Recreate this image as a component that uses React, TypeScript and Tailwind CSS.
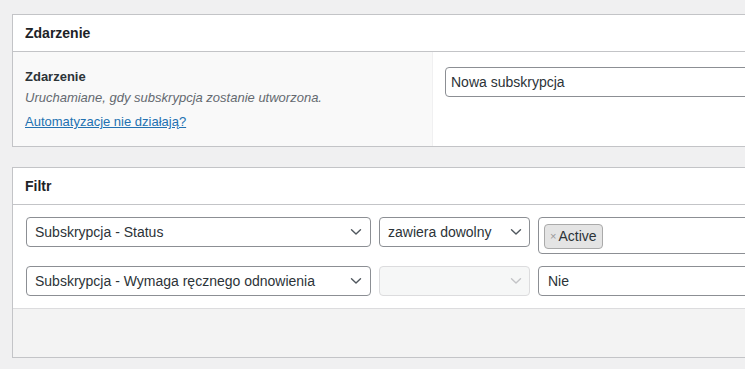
import React from "react";

const Chevron = ({ light = false }: { light?: boolean }) => (
  <svg width="12" height="8" viewBox="0 0 12 8" className="shrink-0">
    <path
      d="M1.5 1.8 L6 6 L10.5 1.8"
      fill="none"
      stroke={light ? "#c3c4c7" : "#50575e"}
      strokeWidth="1.4"
      strokeLinecap="round"
      strokeLinejoin="round"
    />
  </svg>
);

export default function App() {
  return (
    <div
      className="w-[745px] h-[369px] overflow-hidden bg-[#f0f0f1] pl-[12px] pt-[14px] text-[#1d2327]"
      style={{ fontFamily: '"Liberation Sans", Arial, sans-serif' }}
    >
      {/* Card 1 */}
      <div className="w-[900px] bg-white border border-[#c3c4c7]">
        <div className="h-[37px] border-b border-[#c3c4c7] flex items-center pl-[12px]">
          <h2 className="text-[14px] font-bold leading-none">Zdarzenie</h2>
        </div>
        <div className="flex h-[94px]">
          <div className="w-[420px] shrink-0 bg-[#f9f9f9] border-r border-[#f0f0f1] pl-[12px] pt-[17px]">
            <div className="text-[13px] font-bold leading-[16px] text-[#2c3338]">Zdarzenie</div>
            <div className="text-[13px] italic leading-[16px] mt-[5px] text-[#646970]">
              Uruchamiane, gdy subskrypcja zostanie utworzona.
            </div>
            <a className="block text-[13px] leading-[16px] mt-[8px] text-[#2271b1] underline">
              Automatyzacje nie działają?
            </a>
          </div>
          <div className="flex-1 pl-[12px] pt-[15px]">
            <div className="h-[30px] w-[400px] shrink-0 border border-[#8c8f94] rounded-[4px] flex items-center pl-[5px] text-[14px] text-[#2c3338]">
              Nowa subskrypcja
            </div>
          </div>
        </div>
      </div>

      {/* Card 2 */}
      <div className="w-[900px] mt-[20px] bg-white border border-[#c3c4c7]">
        <div className="h-[37px] border-b border-[#c3c4c7] flex items-center pl-[12px]">
          <h2 className="text-[14px] font-bold leading-none">Filtr</h2>
        </div>
        <div className="pl-[13px] pt-[12px] pb-[12px] flex flex-col gap-[12px]">
          <div className="flex items-start gap-[8px]">
            <div className="w-[345px] shrink-0 h-[30px] border border-[#8c8f94] rounded-[4px] flex items-center justify-between pl-[8px] pr-[8px] text-[14px] text-[#2c3338]">
              <span>Subskrypcja - Status</span>
              <Chevron />
            </div>
            <div className="w-[151px] shrink-0 h-[30px] border border-[#8c8f94] rounded-[4px] flex items-center justify-between pl-[8px] pr-[7px] text-[14px] text-[#2c3338]">
              <span>zawiera dowolny</span>
              <Chevron />
            </div>
            <div className="w-[300px] shrink-0 h-[37px] border border-[#8c8f94] rounded-[4px] pl-[5px] pt-[5px]">
              <div className="inline-flex items-center h-[25px] pl-[5px] pr-[5px] bg-[#e4e4e4] border border-[#aaaaaa] rounded-[4px] text-[14px] text-[#2c3338]">
                <span className="text-[11px] text-[#999] mr-[2px] leading-none">×</span>
                <span>Active</span>
              </div>
            </div>
          </div>
          <div className="flex items-start gap-[8px]">
            <div className="w-[345px] shrink-0 h-[30px] border border-[#8c8f94] rounded-[4px] flex items-center justify-between pl-[8px] pr-[8px] text-[14px] text-[#2c3338]">
              <span>Subskrypcja - Wymaga ręcznego odnowienia</span>
              <Chevron />
            </div>
            <div className="w-[151px] shrink-0 h-[30px] border border-[#dcdcde] bg-[#f6f7f7] rounded-[4px] flex items-center justify-end pr-[7px]">
              <Chevron light />
            </div>
            <div className="w-[300px] shrink-0 h-[30px] border border-[#8c8f94] rounded-[4px] flex items-center pl-[9px] text-[14px] text-[#2c3338]">
              Nie
            </div>
          </div>
        </div>
        <div className="h-[49px] border-t border-[#dcdcde] bg-[#f3f3f3]" />
      </div>
    </div>
  );
}
